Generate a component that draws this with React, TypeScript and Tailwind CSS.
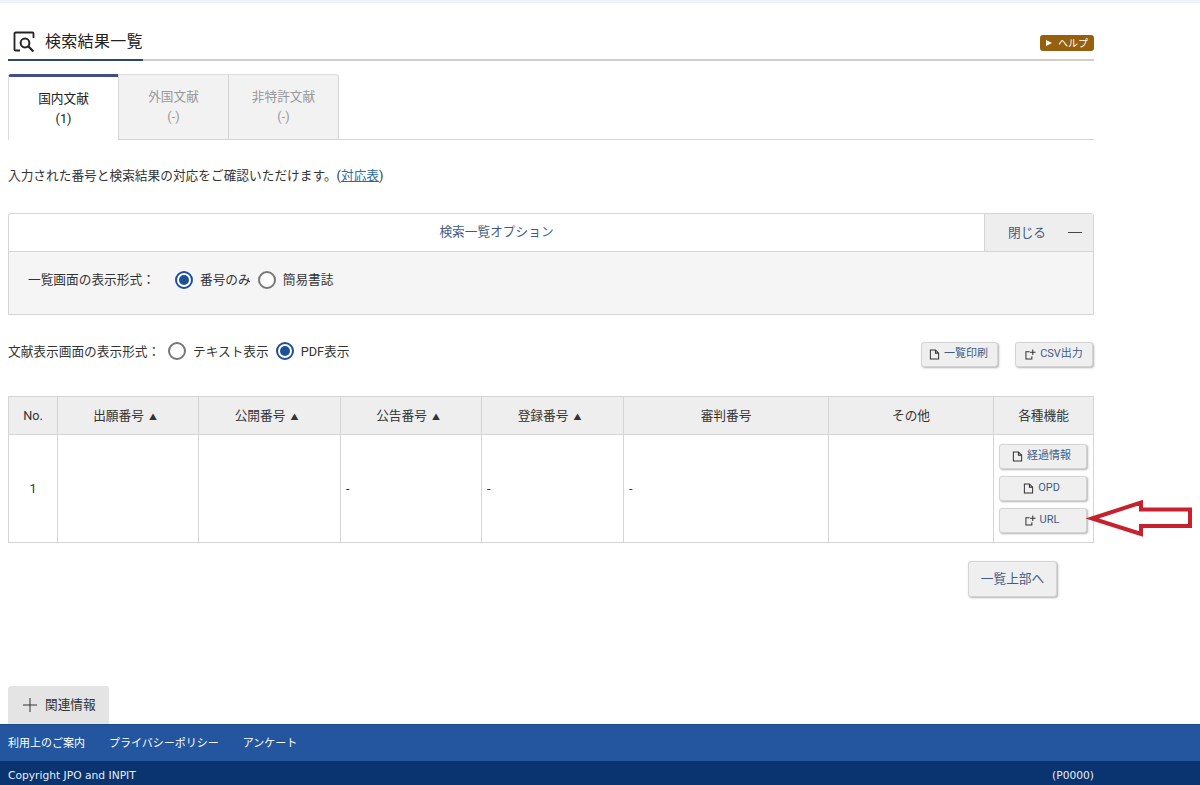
const FileIcon = ({ className = '' }: { className?: string }) => (
  <svg viewBox="0 0 12 12" className={`w-[11px] h-[11px] ${className}`} fill="none" stroke="#333" strokeWidth="1.1">
    <path d="M1.5 1h5.5l3.5 3.5v6.5h-9z" />
    <path d="M7 1v3.5h3.5" />
  </svg>
);

const ExternalIcon = ({ className = '' }: { className?: string }) => (
  <svg viewBox="0 0 12 12" className={`w-[11px] h-[11px] ${className}`} fill="none" stroke="#333" strokeWidth="1.1">
    <path d="M5 3H1v8h6.5V8" />
    <path d="M8.5 0.5v6M5.5 3.5h6" />
  </svg>
);

const SearchListIcon = () => (
  <svg viewBox="0 0 22 22" className="w-[22px] h-[22px]" fill="none" stroke="#222" strokeWidth="1.8">
    <path d="M20.5 7V2.5a1 1 0 0 0-1-1H2.5a1 1 0 0 0-1 1v16a1 1 0 0 0 1 1H7" />
    <circle cx="12" cy="12" r="4.4" strokeWidth="2" />
    <path d="M15.3 15.3l5 5.2" strokeWidth="2.2" />
  </svg>
);

const Radio = ({ checked }: { checked?: boolean }) => (
  <span
    className={`w-[18px] h-[18px] rounded-full border-2 flex items-center justify-center shrink-0 bg-white ${
      checked ? 'border-[#1d5097]' : 'border-[#777777]'
    }`}
  >
    {checked && <span className="w-[10px] h-[10px] rounded-full bg-[#1d5097]" />}
  </span>
);

const SmallButton = ({ children, className = '' }: { children: React.ReactNode; className?: string }) => (
  <button
    className={`flex items-center justify-center gap-1 rounded-[3px] border border-[#d4d4d4] bg-[#efefef] text-[#3f5c88] shadow-[1px_1px_2px_rgba(0,0,0,0.3)] ${className}`}
  >
    {children}
  </button>
);

const headers = [
  { label: 'No.', width: 'w-[49px]' },
  { label: '出願番号', width: 'w-[141px]', sort: true },
  { label: '公開番号', width: 'w-[142px]', sort: true },
  { label: '公告番号', width: 'w-[141px]', sort: true },
  { label: '登録番号', width: 'w-[142px]', sort: true },
  { label: '審判番号', width: 'w-[205px]' },
  { label: 'その他', width: 'w-[165px]' },
  { label: '各種機能', width: 'w-[100px]' },
];

export default function App() {
  return (
    <div className="relative h-[785px] w-[1200px] overflow-hidden bg-white flex flex-col font-['Roboto','Noto_Sans_CJK_JP',sans-serif] text-[12.7px] text-[#333333]">
      <div className="h-[3px] bg-[#edf3f9]" />

      <div className="w-[1086px] ml-2">
        {/* Header */}
        <div className="relative mt-[24px] h-[34px] flex items-start justify-between border-b-2 border-[#cfcfcf]">
          <div className="flex items-center h-[34px] pl-[5px] gap-[10px] text-[16px] tracking-[0.3px] text-[#222222]">
            <span className="relative top-[-2px]"><SearchListIcon /></span>
            <span className="leading-[28px] pb-[4px]">検索結果一覧</span>
          </div>
          <div className="absolute left-0 bottom-[-2px] w-[135px] h-[2px] bg-[#2c4a63]" />
          <button className="mt-[8px] flex items-center h-[16px] w-[54px] rounded-[3px] bg-[#96600f] text-white text-[10px] pl-[6px] gap-[6px]">
            <span className="w-0 h-0 border-y-[3px] border-y-transparent border-l-[6px] border-l-white" />
            ヘルプ
          </button>
        </div>

        {/* Tabs */}
        <div className="mt-[13px] flex h-[66px] border-b border-[#d5d5d5]">
          <div className="w-[110px] h-[66px] border-t-[3px] border-t-[#3f4f8a] border-l border-l-[#dddddd] rounded-tl-[3px] bg-white flex flex-col items-center justify-center leading-[20px] text-[#222222]">
            <span>国内文献</span>
            <span>(1)</span>
          </div>
          <div className="w-[111px] h-[65px] border-t border-t-[#dddddd] border-x border-[#d5d5d5] bg-[#f2f2f2] flex flex-col items-center justify-center leading-[20px] text-[#999999] pb-[1px]">
            <span>外国文献</span>
            <span>(-)</span>
          </div>
          <div className="w-[110px] h-[65px] border-t border-t-[#dddddd] border-r border-[#d5d5d5] rounded-tr-[3px] bg-[#f2f2f2] flex flex-col items-center justify-center leading-[20px] text-[#999999] pb-[1px]">
            <span>非特許文献</span>
            <span>(-)</span>
          </div>
        </div>

        <p className="mt-[26px] leading-[20px]">
          入力された番号と検索結果の対応をご確認いただけます。(
          <a className="text-[#2f6a9c] underline">対応表</a>)
        </p>

        {/* Options panel */}
        <div className="mt-[27px] h-[102px] border border-[#d5d5d5] rounded-t-[3px]">
          <div className="flex h-[38px] border-b border-[#d5d5d5]">
            <div className="flex-1 flex items-center justify-center text-[#3f5c88] pb-[1px]">検索一覧オプション</div>
            <div className="w-[109px] flex items-center justify-between bg-[#eeeeee] border-l border-[#d5d5d5] pl-[23px] pr-[11px] text-[#3f5c88]">
              <span>閉じる</span>
              <span className="w-[14px] h-[1px] bg-[#444444]" />
            </div>
          </div>
          <div className="h-[62px] bg-[#f5f5f5] flex items-center pl-[19px] pb-[6px]">
            <span className="w-[147px]">一覧画面の表示形式：</span>
            <Radio checked />
            <span className="ml-[7px]">番号のみ</span>
            <span className="ml-[7px]"><Radio /></span>
            <span className="ml-[7px]">簡易書誌</span>
          </div>
        </div>

        {/* Display format and export */}
        <div className="mt-[27px] h-[25px] flex items-center justify-between">
          <div className="flex items-center relative top-[-3px]">
            <span className="w-[160px]">文献表示画面の表示形式：</span>
            <Radio />
            <span className="ml-[7px]">テキスト表示</span>
            <span className="ml-[7px]"><Radio checked /></span>
            <span className="ml-[7px]">PDF表示</span>
          </div>
          <div className="flex gap-[17px] pr-[1px]">
            <SmallButton className="w-[77px] h-[25px] text-[11px] pr-[2px]"><FileIcon />一覧印刷</SmallButton>
            <SmallButton className="w-[78px] h-[25px] text-[11px]"><ExternalIcon />CSV出力</SmallButton>
          </div>
        </div>

        {/* Results */}
        <table className="mt-[29px] w-[1085px] table-fixed border-collapse">
          <thead>
            <tr className="h-[38px] bg-[#eeeeee]">
              {headers.map((h) => (
                <th key={h.label} className={`${h.width} border border-[#d5d5d5] font-normal ${h.sort ? 'pr-[6px]' : ''}`}>
                  {h.label}
                  {h.sort && <span className="ml-[5px] text-[8px]">▲</span>}
                </th>
              ))}
            </tr>
          </thead>
          <tbody>
            <tr className="h-[108px]">
              <td className="border border-[#d5d5d5] text-center">1</td>
              <td className="border border-[#d5d5d5]" />
              <td className="border border-[#d5d5d5]" />
              <td className="border border-[#d5d5d5] pl-[5px]">-</td>
              <td className="border border-[#d5d5d5] pl-[5px]">-</td>
              <td className="border border-[#d5d5d5] pl-[5px]">-</td>
              <td className="border border-[#d5d5d5]" />
              <td className="border border-[#d5d5d5] px-[5px]">
                <div className="flex flex-col gap-[7px]">
                  <SmallButton className="w-[88px] h-[25px] text-[11px] pr-[3px]"><FileIcon />経過情報</SmallButton>
                  <SmallButton className="w-[88px] h-[25px] text-[11px] pr-[3px]"><FileIcon />OPD</SmallButton>
                  <SmallButton className="w-[88px] h-[25px] text-[11px] pr-[2px]"><ExternalIcon />URL</SmallButton>
                </div>
              </td>
            </tr>
          </tbody>
        </table>

        <div className="mt-[18px] flex justify-end pr-[37px]">
          <SmallButton className="w-[89px] h-[36px] text-[12.7px]">一覧上部へ</SmallButton>
        </div>
      </div>

      {/* Footer */}
      <div className="mt-auto">
        <div className="ml-2 w-[101px] h-[38px] rounded-t-[3px] bg-[#e4e4e4] flex items-center pl-[15px] gap-[8px]">
          <svg viewBox="0 0 14 14" className="w-[14px] h-[14px]" stroke="#333" strokeWidth="1">
            <path d="M7 0v14M0 7h14" />
          </svg>
          関連情報
        </div>
        <div className="h-[37px] bg-[#23569f] border-t border-[#1b4a8a] flex items-center pl-2 pt-[3px] gap-[24px] text-[11px] text-white">
          <span>利用上のご案内</span>
          <span>プライバシーポリシー</span>
          <span>アンケート</span>
        </div>
        <div className="h-[24px] bg-[#0a3470] flex items-center justify-between pl-2 pr-[106px] pt-[7px] font-['DejaVu_Sans',sans-serif] text-[10.7px] text-[#e6ecf5]">
          <span>Copyright JPO and INPIT</span>
          <span>(P0000)</span>
        </div>
      </div>

      {/* red annotation arrow */}
      <svg className="absolute left-[1085px] top-[495px] w-[115px] h-[45px]" viewBox="0 0 115 45" fill="none">
        <path d="M7 23.5L56 7.5V14.5H105V31H56V39Z" stroke="#c8212e" strokeWidth="4" />
      </svg>
    </div>
  );
}
